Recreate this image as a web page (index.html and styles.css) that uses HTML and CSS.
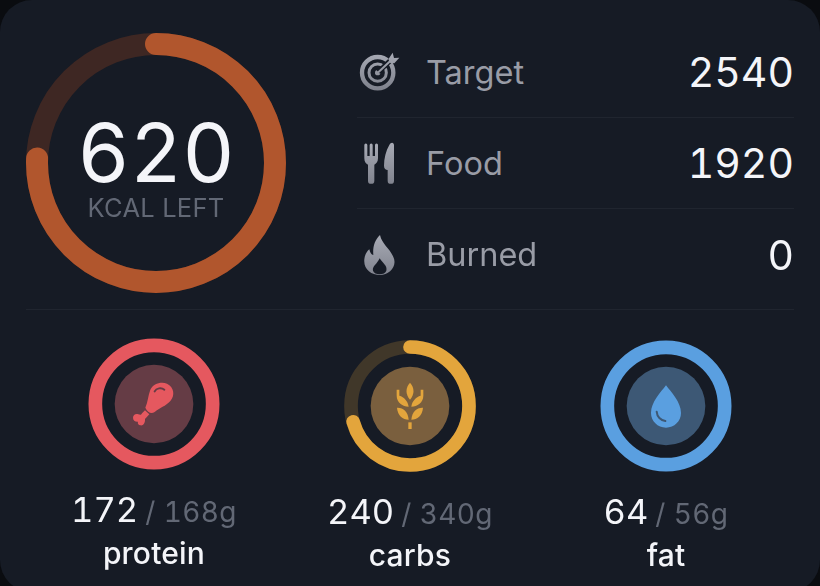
FILE: index.html
```html
<!DOCTYPE html>
<html lang="en">
<head>
<meta charset="utf-8">
<title>Nutrition summary</title>
<link rel="stylesheet" href="styles.css">
</head>
<body>
<svg class="defs" width="0" height="0" aria-hidden="true">
  <defs>
    <linearGradient id="greyT" gradientUnits="userSpaceOnUse" x1="0" y1="68" x2="0" y2="186">
      <stop offset="0" stop-color="#a8abb5"/>
      <stop offset="1" stop-color="#7c7f8a"/>
    </linearGradient>
    <linearGradient id="greyF" gradientUnits="userSpaceOnUse" x1="0" y1="338" x2="0" y2="462">
      <stop offset="0" stop-color="#a8abb5"/>
      <stop offset="1" stop-color="#80838e"/>
    </linearGradient>
    <linearGradient id="greyB" gradientUnits="userSpaceOnUse" x1="0" y1="612" x2="0" y2="732">
      <stop offset="0" stop-color="#a8abb5"/>
      <stop offset="1" stop-color="#80838e"/>
    </linearGradient>
  </defs>
</svg>
<main class="card">
  <section class="summary">
    <div class="calorie">
      <svg class="calorie-ring" viewBox="0 0 260 260">
        <circle class="cal-track" cx="130" cy="130" r="119"/>
        <circle class="cal-progress" cx="130" cy="130" r="119" pathLength="100" stroke-dasharray="75.6 100" transform="rotate(-90 130 130)"/>
      </svg>
      <div class="calorie-text">
        <div class="calorie-value">620</div>
        <div class="calorie-label">KCAL LEFT</div>
      </div>
    </div>
    <div class="stats">
      <div class="stat">
        <svg class="stat-icon" viewBox="53 60 132 132">
          <circle class="tg-stroke" cx="115" cy="128" r="47" stroke-width="13"/>
          <circle class="tg-stroke" cx="115" cy="128" r="26" stroke-width="9"/>
          <circle class="tg-fill" cx="115" cy="128" r="8"/>
          <line class="ic-cut" x1="117" y1="126" x2="165" y2="80" stroke-width="15"/>
          <line class="tg-stroke" x1="117" y1="127" x2="160" y2="86" stroke-width="6" stroke-linecap="round"/>
          <path class="tg-fill" d="M147 88 L160 68 L164 84 L180 83 L165 100 L153 99 Z"/>
        </svg>
        <span class="stat-name">Target</span>
        <span class="stat-value">2540</span>
      </div>
      <div class="stat">
        <svg class="stat-icon" viewBox="53 333 132 132">
          <path class="fd-fill" d="M75 345a4.500 4.500 0 0 1 9 0V378H91V345a4.500 4.500 0 0 1 9 0V378H107V345a4.500 4.500 0 0 1 9 0V385C116 396 110 402 105 404V452a9.500 9.500 0 0 1-19 0V404C80 402 75 396 75 385Z"/>
          <path class="fd-fill" d="M164 346C164 337 155 335 150 345C140 362 134 385 134 407C134 416 139 420 145 420V452a9.500 9.500 0 0 0 19 0Z"/>
        </svg>
        <span class="stat-name">Food</span>
        <span class="stat-value">1920</span>
      </div>
      <div class="stat">
        <svg class="stat-icon" viewBox="53 606 132 132">
          <path class="bn-fill" d="M122 612C128 640 150 650 162 678C175 705 150 732 122 732C95 732 72 715 75 685C76 672 82 662 90 655C92 665 96 672 102 672C100 650 105 628 122 612Z"/>
          <path class="ic-hole" d="M121 682C130 696 145 705 141 719C137 733 105 733 101 719C98 706 113 700 121 682Z"/>
        </svg>
        <span class="stat-name">Burned</span>
        <span class="stat-value">0</span>
      </div>
    </div>
  </section>
  <section class="macros">
    <div class="macro macro-protein">
      <svg class="macro-ring" viewBox="25 23 396 396">
        <circle class="disc" cx="223" cy="221" r="118"/>
        <circle class="progress" cx="223" cy="221" r="176"/>
        <path class="glyph" d="M197 232C205 215 205 195 212 178C220 160 245 152 262 160C283 170 287 195 272 212C258 228 240 232 225 245C215 252 205 248 197 232Z"/>
        <path class="glyph" d="M196 240L209 252L196 266C197 278 191 287 182 285C176 284 173 279 175 274C167 275 160 270 160 262C160 254 168 249 176 252C181 254 184 255 187 249Z"/>
        <path class="glyph-line" d="M225 183C230 173 245 171 254 178"/>
      </svg>
      <div class="macro-nums"><span class="macro-value">172</span><span class="macro-goal">/ 168g</span></div>
      <div class="macro-name">protein</div>
    </div>
    <div class="macro macro-carbs">
      <svg class="macro-ring" viewBox="29 29 396 396">
        <circle class="disc" cx="227" cy="227" r="118"/>
        <circle class="track" cx="227" cy="227" r="177"/>
        <circle class="progress round" cx="227" cy="227" r="177" pathLength="100" stroke-dasharray="70.6 100" transform="rotate(-90 227 227)"/>
        <path class="glyph" d="M227 157C241 172 241 192 227 208C213 192 213 172 227 157Z"/>
        <path class="glyph" d="M187 178H195V196C209 200 221 212 223 229C205 229 187 216 187 196Z"/>
        <path class="glyph" d="M267 178H259V196C245 200 233 212 231 229C249 229 267 216 267 196Z"/>
        <path class="glyph" d="M188 232C206 231 221 243 223 268C205 268 190 256 188 232Z"/>
        <path class="glyph" d="M266 232C248 231 233 243 231 268C249 268 264 256 266 232Z"/>
        <rect class="glyph" x="222" y="276" width="10" height="20"/>
      </svg>
      <div class="macro-nums"><span class="macro-value">240</span><span class="macro-goal">/ 340g</span></div>
      <div class="macro-name">carbs</div>
    </div>
    <div class="macro macro-fat">
      <svg class="macro-ring" viewBox="32 29 396 396">
        <circle class="disc" cx="230" cy="227" r="118"/>
        <circle class="progress" cx="230" cy="227" r="176"/>
        <path class="glyph" d="M230 165C245 185 275 215 275 248C275 272 255 292 230 292C205 292 185 272 185 248C185 215 215 185 230 165Z"/>
        <path class="glyph-line" d="M202 244C203 259 214 270 228 272"/>
      </svg>
      <div class="macro-nums"><span class="macro-value">64</span><span class="macro-goal">/ 56g</span></div>
      <div class="macro-name">fat</div>
    </div>
  </section>
</main>
</body>
</html>
```

FILE: styles.css
```css
* {
  box-sizing: border-box;
}

html,
body {
  margin: 0;
  padding: 0;
  height: 586px;
  overflow: hidden;
  background: #0a0c10;
}

.defs {
  display: block;
  height: 0;
}

.card {
  width: 820px;
  height: 592px;
  overflow: hidden;
  background: #161b25;
  border-radius: 32px;
  font-family: Inter, "Liberation Sans", sans-serif;
  font-variant-numeric: tabular-nums;
  display: flex;
  flex-direction: column;
  padding: 0 26px;
  filter: blur(0.35px);
}

.summary {
  height: 310px;
  flex: none;
  display: flex;
  border-bottom: 1px solid #20252f;
}

.calorie {
  position: relative;
  width: 260px;
  height: 260px;
  margin-top: 33px;
  flex: none;
}

.calorie-ring {
  display: block;
  width: 260px;
  height: 260px;
}

.cal-track,
.cal-progress {
  fill: none;
  stroke-width: 22;
}

.cal-track {
  stroke: #3e2723;
}

.cal-progress {
  stroke: #b1562d;
  stroke-linecap: round;
}

.calorie-text {
  position: absolute;
  inset: 0;
  display: flex;
  flex-direction: column;
  align-items: center;
  padding-top: 85px;
}

.calorie-value {
  font-size: 81px;
  line-height: 70px;
  color: #f4f5f9;
}

.calorie-label {
  font-size: 25.5px;
  line-height: 28px;
  letter-spacing: 0.3px;
  color: #626875;
  margin-top: 6px;
}

.stats {
  flex: 1;
  margin-left: 71px;
  padding-top: 27px;
}

.stat {
  height: 91px;
  display: flex;
  align-items: center;
  border-bottom: 1px solid #20252f;
}

.stat:last-child {
  border-bottom: 0;
}

.stat-icon {
  width: 44px;
  height: 44px;
  flex: none;
  margin-right: 25px;
}

.tg-stroke {
  fill: none;
  stroke: url(#greyT);
}

.tg-fill {
  fill: url(#greyT);
}

.fd-fill {
  fill: url(#greyF);
}

.bn-fill {
  fill: url(#greyB);
}

.ic-cut {
  stroke: #161b25;
}

.ic-hole {
  fill: #161b25;
}

.stat-name {
  font-size: 32.5px;
  color: #999ca6;
}

.stat-value {
  margin-left: auto;
  font-size: 41px;
  color: #f4f5f9;
}

.macros {
  flex: 1;
  display: grid;
  grid-template-columns: repeat(3, 1fr);
  padding-top: 28px;
}

.macro {
  display: flex;
  flex-direction: column;
  align-items: center;
}

.macro-carbs,
.macro-fat {
  margin-top: 2px;
}

.macro-ring {
  display: block;
  width: 132px;
  height: 132px;
  margin-bottom: 18px;
}

.track,
.progress {
  fill: none;
  stroke-width: 41;
}

.round {
  stroke-linecap: round;
}

.glyph-line {
  fill: none;
  stroke-width: 6;
  stroke-linecap: round;
}

.macro-protein .progress {
  stroke: #e5585f;
}

.macro-protein .glyph {
  fill: #e5585f;
}

.macro-protein .disc {
  fill: #653c45;
}

.macro-protein .glyph-line {
  stroke: #653c45;
}

.macro-carbs .progress {
  stroke: #e3a53c;
}

.macro-carbs .track {
  stroke: #403729;
}

.macro-carbs .glyph {
  fill: #e3a53c;
}

.macro-carbs .disc {
  fill: #7a5f3e;
}

.macro-fat .progress {
  stroke: #5a9fe0;
}

.macro-fat .glyph {
  fill: #5a9fe0;
}

.macro-fat .disc {
  fill: #3d5875;
}

.macro-fat .glyph-line {
  stroke: #3d5875;
}

.macro-nums {
  display: flex;
  align-items: baseline;
  gap: 7px;
  line-height: 44px;
}

.macro-value {
  font-size: 34.5px;
  color: #f4f5f9;
}

.macro-goal {
  font-size: 28px;
  letter-spacing: 0.4px;
  color: #626875;
}

.macro-name {
  font-size: 30px;
  line-height: 38px;
  letter-spacing: 0.2px;
  font-weight: 500;
  color: #f4f5f9;
}
```
